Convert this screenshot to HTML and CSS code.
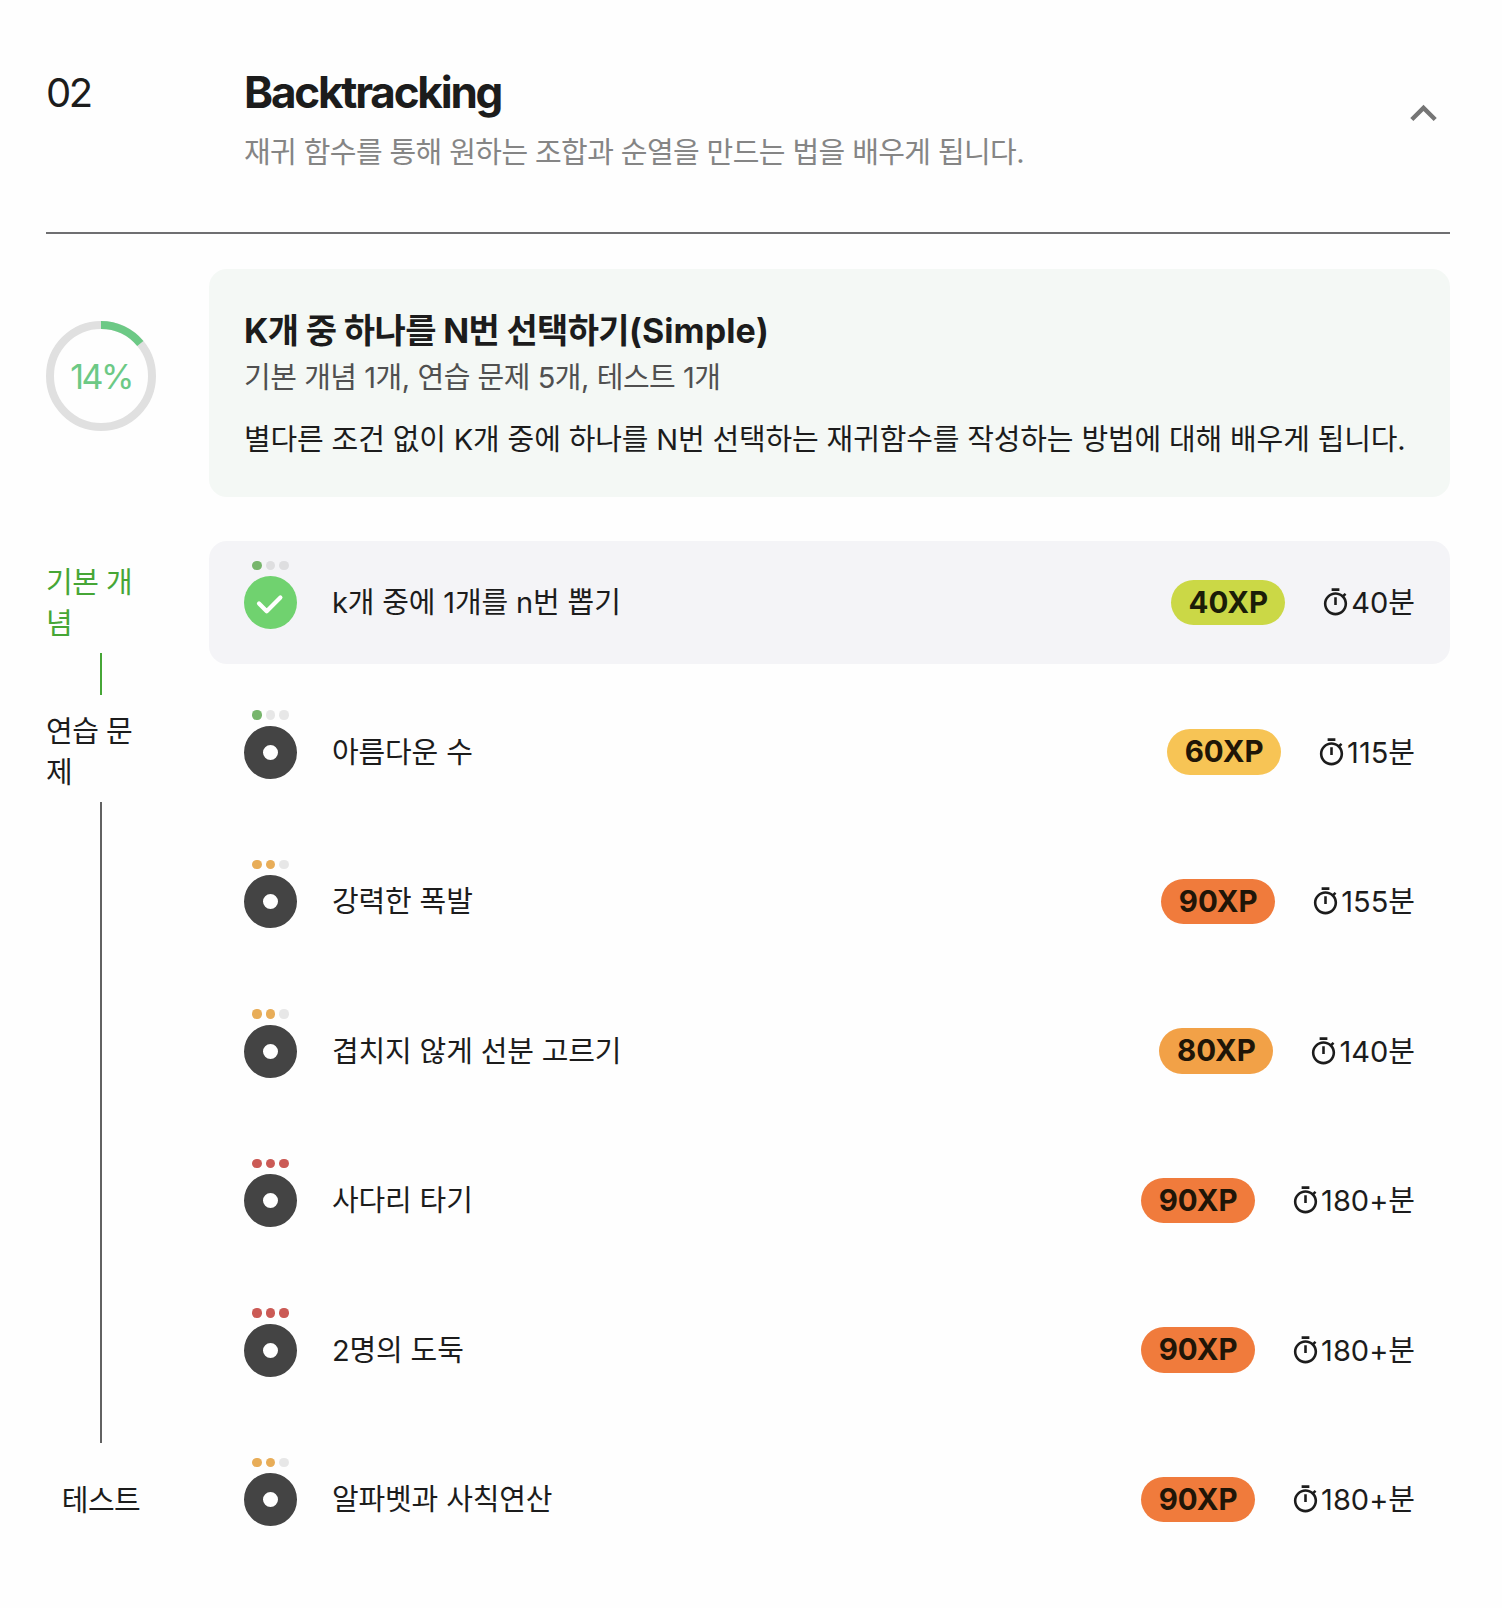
FILE: index.html
```
<!DOCTYPE html>
<html lang="ko">
<head>
<meta charset="utf-8">
<title>Backtracking</title>
<link rel="stylesheet" href="styles.css">
</head>
<body>
<svg width="0" height="0" class="defs" aria-hidden="true">
  <symbol id="timer" viewBox="0 0 24 24"><path d="M15 1H9v2h6V1zm-4 13h2V8h-2v6zm8.03-6.61 1.42-1.42c-.43-.51-.9-.99-1.41-1.41l-1.42 1.42C16.07 4.74 14.12 4 12 4c-4.97 0-9 4.03-9 9s4.02 9 9 9 9-4.03 9-9c0-2.12-.74-4.07-1.97-5.61zM12 20c-3.87 0-7-3.13-7-7s3.13-7 7-7 7 3.13 7 7-3.13 7-7 7z"/></symbol>
</svg>
<main class="chapter">
  <header class="chapter-head">
    <div class="chapter-no">02</div>
    <div class="chapter-text">
      <h1>Backtracking</h1>
      <p>재귀 함수를 통해 원하는 조합과 순열을 만드는 법을 배우게 됩니다.</p>
    </div>
    <svg class="chevron" viewBox="0 0 24 24"><path d="m12 8-6 6 1.41 1.41L12 10.83l4.59 4.58L18 14z"/></svg>
  </header>

  <section class="summary">
    <div class="ring">
      <svg viewBox="0 0 110 110">
        <circle class="ring-track" cx="55" cy="55" r="51"/>
        <circle class="ring-value" cx="55" cy="55" r="51" pathLength="100" stroke-dasharray="14 86" transform="rotate(-90 55 55)"/>
      </svg>
      <span>14%</span>
    </div>
    <div class="summary-card">
      <h2>K개 중 하나를 N번 선택하기<span class="latin">(Simple)</span></h2>
      <p class="meta">기본 개념 1개, 연습 문제 5개, 테스트 1개</p>
      <p class="desc">별다른 조건 없이 K개 중에 하나를 N번 선택하는 재귀함수를 작성하는 방법에 대해 배우게 됩니다.</p>
    </div>
  </section>

  <section class="content">
    <nav class="steps">
      <div class="step done">기본 개념</div>
      <div class="bar done"></div>
      <div class="step">연습 문제</div>
      <div class="bar long"></div>
      <div class="step">테스트</div>
    </nav>
    <ul class="rows">
      <li class="row active">
        <div class="status"><div class="dots"><i class="easy"></i><i></i><i></i></div>
          <svg class="badge" viewBox="0 0 53 53"><circle class="ok" cx="26.5" cy="26.5" r="26.5"/><path class="tick" d="M15 27.4l7.7 7.8 13.7-13.7"/></svg></div>
        <span class="name">k개 중에 1개를 n번 뽑기</span><span class="xp lime">40XP</span>
        <span class="time"><svg><use href="#timer"/></svg>40분</span>
      </li>
      <li class="row">
        <div class="status"><div class="dots"><i class="easy"></i><i></i><i></i></div><div class="badge todo"></div></div>
        <span class="name">아름다운 수</span><span class="xp yellow">60XP</span>
        <span class="time"><svg><use href="#timer"/></svg>115분</span>
      </li>
      <li class="row">
        <div class="status"><div class="dots"><i class="mid"></i><i class="mid"></i><i></i></div><div class="badge todo"></div></div>
        <span class="name">강력한 폭발</span><span class="xp orange">90XP</span>
        <span class="time"><svg><use href="#timer"/></svg>155분</span>
      </li>
      <li class="row">
        <div class="status"><div class="dots"><i class="mid"></i><i class="mid"></i><i></i></div><div class="badge todo"></div></div>
        <span class="name">겹치지 않게 선분 고르기</span><span class="xp amber">80XP</span>
        <span class="time"><svg><use href="#timer"/></svg>140분</span>
      </li>
      <li class="row">
        <div class="status"><div class="dots"><i class="hard"></i><i class="hard"></i><i class="hard"></i></div><div class="badge todo"></div></div>
        <span class="name">사다리 타기</span><span class="xp orange">90XP</span>
        <span class="time"><svg><use href="#timer"/></svg>180+분</span>
      </li>
      <li class="row">
        <div class="status"><div class="dots"><i class="hard"></i><i class="hard"></i><i class="hard"></i></div><div class="badge todo"></div></div>
        <span class="name">2명의 도둑</span><span class="xp orange">90XP</span>
        <span class="time"><svg><use href="#timer"/></svg>180+분</span>
      </li>
      <li class="row">
        <div class="status"><div class="dots"><i class="mid"></i><i class="mid"></i><i></i></div><div class="badge todo"></div></div>
        <span class="name">알파벳과 사칙연산</span><span class="xp orange">90XP</span>
        <span class="time"><svg><use href="#timer"/></svg>180+분</span>
      </li>
    </ul>
  </section>
</main>
</body>
</html>
```
FILE: styles.css
```
* { box-sizing: border-box; margin: 0; padding: 0; }

body {
  background: #fefefe;
  color: #1c1c1c;
  font: 400 29px/41px Inter, "Noto Sans CJK KR", sans-serif;
  letter-spacing: -0.15px;
}

.defs { display: block; }

.chapter { padding: 64px 52px 0 46px; }

.chapter-head {
  display: flex;
  align-items: flex-start;
  height: 170px;
  border-bottom: 2px solid #6f6f71;
}
.chapter-no {
  width: 198px;
  font-size: 40px;
  line-height: 58px;
  letter-spacing: -2.6px;
}
.chapter-text { flex: 1; }
.chapter-text h1 {
  font-size: 44px;
  line-height: 56px;
  letter-spacing: -2.2px;
}
.chapter-text p {
  margin-top: 12px;
  color: #858585;
  letter-spacing: -0.6px;
}
.chevron {
  width: 53px;
  height: 53px;
  margin-top: 23px;
  fill: #757575;
}

.summary {
  display: flex;
  gap: 53px;
  margin-top: 35px;
}
.ring {
  display: grid;
  width: 110px;
  height: 110px;
  margin-top: 52px;
  place-items: center;
}
.ring svg, .ring span { grid-area: 1 / 1; }
.ring svg { width: 110px; height: 110px; fill: none; stroke-width: 8; }
.ring-track { stroke: #e0e0e0; }
.ring-value { stroke: #6cc985; }
.ring span {
  color: #6cc985;
  font-size: 34px;
  letter-spacing: -2.6px;
}
.summary-card {
  flex: 1;
  height: 228px;
  padding: 38px 35px 0;
  border-radius: 18px;
  background: #f4f8f5;
  white-space: nowrap;
}
.summary-card h2 {
  font-size: 34px;
  line-height: 48px;
  letter-spacing: -0.65px;
}
.summary-card .latin { letter-spacing: 0.1px; }
.meta { margin-top: 2px; color: #505050; letter-spacing: -0.46px; }
.desc { margin-top: 21px; }

.content {
  display: flex;
  gap: 53px;
  margin-top: 44px;
}
.steps {
  display: flex;
  flex-direction: column;
  align-items: center;
  width: 110px;
  padding-top: 21px;
  letter-spacing: -0.5px;
}
.step { word-break: break-all; }
.step.done { color: #46a636; }
.bar {
  width: 2px;
  height: 42px;
  margin: 9px 0 16px;
  background: #626262;
}
.bar.done { background: #46a636; }
.bar.long { height: 641px; margin-bottom: 37px; }

.rows {
  display: flex;
  flex: 1;
  flex-direction: column;
  gap: 26.5px;
  list-style: none;
}
.row {
  display: flex;
  align-items: center;
  height: 123px;
  padding: 0 35px;
  border-radius: 18px;
}
.row.active { background: #f4f4f7; }
.status {
  display: flex;
  flex-direction: column;
  align-items: center;
  gap: 6px;
  padding-bottom: 15px;
}
.dots { display: flex; gap: 4.2px; }
.dots i {
  width: 9.3px;
  height: 9.3px;
  border-radius: 50%;
  background: rgba(0, 0, 0, 0.09);
}
.dots .easy { background: #77b56c; }
.dots .mid { background: #e8ad58; }
.dots .hard { background: #cb5a55; }
.badge { display: block; width: 53px; height: 53px; }
.ok { fill: #70d26f; }
.tick {
  fill: none;
  stroke: #fff;
  stroke-width: 4.2;
  stroke-linecap: round;
  stroke-linejoin: round;
}
.todo {
  border: 19px solid #444;
  border-radius: 50%;
  background: #fff;
}
.name { flex: 1; margin-left: 35px; }
.xp {
  width: 114px;
  margin-right: 35px;
  border-radius: 23px;
  color: #201507;
  font-size: 29.5px;
  font-weight: 700;
  line-height: 45.5px;
  letter-spacing: 0;
  text-align: center;
}
.lime { background: #cbd846; color: #1b1d08; }
.yellow { background: #f7c455; }
.amber { background: #f2a147; }
.orange { background: #f07b3c; }
.time {
  display: flex;
  align-items: center;
  font-kerning: none;
  letter-spacing: 0;
}
.time svg { width: 31px; height: 31px; fill: #1c1c1c; }
```
